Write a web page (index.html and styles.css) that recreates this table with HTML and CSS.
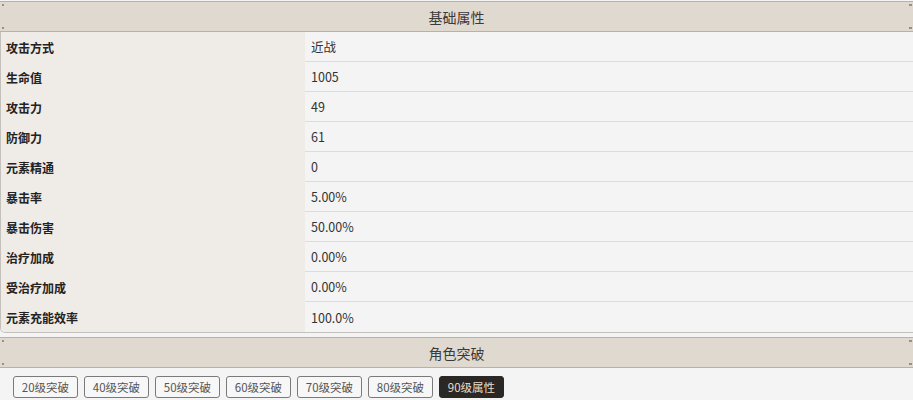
FILE: index.html
```html
<!DOCTYPE html>
<html lang="zh">
<head>
<meta charset="utf-8">
<link rel="stylesheet" href="styles.css">
</head>
<body>
<div class="page">
  <div class="bar"><span class="bar-title">基础属性</span></div>
  <div class="table">
    <div class="row"><div class="label">攻击方式</div><div class="value">近战</div></div>
    <div class="row"><div class="label">生命值</div><div class="value">1005</div></div>
    <div class="row"><div class="label">攻击力</div><div class="value">49</div></div>
    <div class="row"><div class="label">防御力</div><div class="value">61</div></div>
    <div class="row"><div class="label">元素精通</div><div class="value">0</div></div>
    <div class="row"><div class="label">暴击率</div><div class="value">5.00%</div></div>
    <div class="row"><div class="label">暴击伤害</div><div class="value">50.00%</div></div>
    <div class="row"><div class="label">治疗加成</div><div class="value">0.00%</div></div>
    <div class="row"><div class="label">受治疗加成</div><div class="value">0.00%</div></div>
    <div class="row"><div class="label">元素充能效率</div><div class="value">100.0%</div></div>
  </div>
  <div class="bar bar-second"><span class="bar-title">角色突破</span></div>
  <div class="tabs">
    <span class="tab">20级突破</span>
    <span class="tab">40级突破</span>
    <span class="tab">50级突破</span>
    <span class="tab">60级突破</span>
    <span class="tab">70级突破</span>
    <span class="tab">80级突破</span>
    <span class="tab tab-active">90级属性</span>
  </div>
</div>
</body>
</html>
```
FILE: styles.css
```css
html, body {
  margin: 0;
  padding: 0;
  background: #f4f4f4;
}
body {
  font-family: "Noto Sans CJK SC", "Noto Sans", sans-serif;
  color: #333;
}
.page {
  padding-top: 1px;
}
.bar {
  position: relative;
  height: 29px;
  background: #e0d9d0;
  border-top: 1px solid #b9b1a9;
  border-bottom: 1px solid #b9b1a9;
  display: flex;
  align-items: center;
  justify-content: center;
}
.bar::before, .bar::after {
  content: "";
  position: absolute;
  left: 2px;
  width: 2px;
  height: 2px;
  background: #9a8f86;
}
.bar::before { top: 2px; }
.bar::after { bottom: 2px; }
.bar-title {
  font-size: 14px;
  color: #3a3a3a;
  line-height: 1;
}
.bar-title::before, .bar-title::after {
  content: "";
  position: absolute;
  right: 1px;
  width: 3px;
  height: 2px;
  background: #9a8f86;
}
.bar-title::before { top: 2px; }
.bar-title::after { bottom: 2px; }
.table {
  border: 1px solid #c4c0bb;
  border-top: none;
  border-right: none;
  border-radius: 0 0 0 5px;
  overflow: hidden;
}
.row {
  display: grid;
  grid-template-columns: 304px 1fr;
  height: 30px;
}
.label {
  background: #efebe6;
  font-size: 12px;
  font-weight: bold;
  color: #222;
  padding-left: 5px;
  display: flex;
  align-items: center;
}
.value {
  background: #f4f4f4;
  font-size: 12.5px;
  color: #333;
  padding-left: 6px;
  display: flex;
  align-items: center;
  border-bottom: 1px solid #dcdcdc;
}
.row:last-child .value {
  border-bottom: none;
}
.bar-second {
  margin-top: 4px;
}
.tabs {
  display: flex;
  gap: 6px;
  padding: 8px 13px;
}
.tab {
  box-sizing: border-box;
  width: 65px;
  height: 22px;
  border: 1px solid #7a7a7a;
  border-radius: 3px;
  font-size: 11.5px;
  color: #555;
  display: flex;
  align-items: center;
  justify-content: center;
  background: #f7f7f7;
}
.tab-active {
  background: #2a2725;
  border-color: #2a2725;
  color: #eadfc8;
}
```
